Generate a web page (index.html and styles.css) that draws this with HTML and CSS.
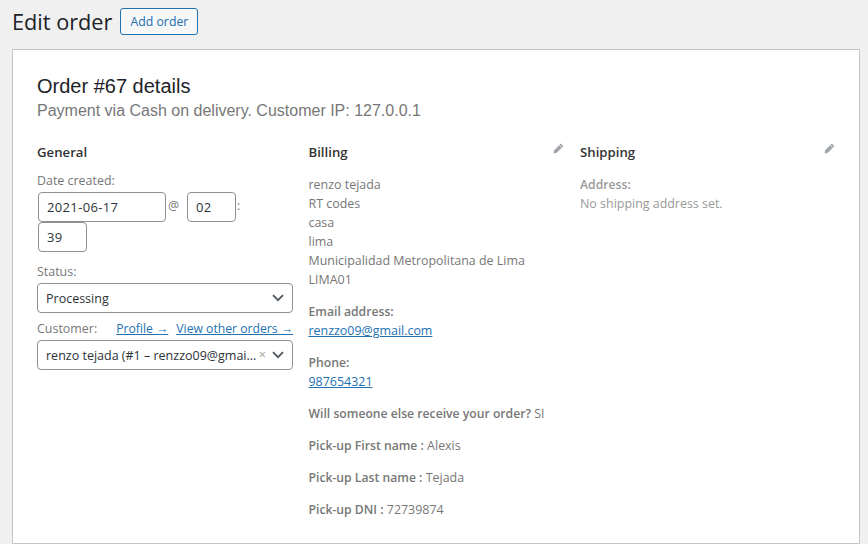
FILE: index.html
```html
<!doctype html>
<html>
<head>
  <title>Edit order</title>
  <link rel="stylesheet" href="styles.css">
</head>
<body>
  <div class="page-head">
    <h1>Edit order</h1>
    <a class="add-btn">Add order</a>
  </div>

  <div class="panel">
    <h2>Order #67 details</h2>
    <p class="meta">Payment via Cash on delivery. Customer IP: 127.0.0.1</p>

    <div class="columns">
      <div class="col">
        <h3>General</h3>
        <div class="field-label date-label">Date created:</div>
        <div class="date-row">
          <span class="input date-input digits">2021-06-17</span>
          <span class="sep">@</span>
          <span class="input num-input digits">02</span>
          <span class="sep colon">:</span>
          <span class="input num-input digits">39</span>
        </div>
        <div class="field-label status-label">Status:</div>
        <div class="input select">
          <span class="select-text">Processing</span>
          <svg class="chev" width="12" height="8" viewBox="0 0 12 8"><path d="M1 1.2l5 5 5-5" fill="none" stroke="#50575e" stroke-width="1.8"/></svg>
        </div>
        <div class="customer-row">
          <span class="field-label">Customer:</span>
          <span class="customer-links"><a>Profile →</a><a>View other orders →</a></span>
        </div>
        <div class="input select">
          <span class="select-text">renzo tejada (#1 – renzzo09@gmai...</span>
          <span class="clear">×</span>
          <svg class="chev" width="12" height="8" viewBox="0 0 12 8"><path d="M1 1.2l5 5 5-5" fill="none" stroke="#50575e" stroke-width="1.8"/></svg>
        </div>
      </div>

      <div class="col">
        <h3>Billing
          <svg class="pencil" width="11" height="11" viewBox="0 0 11 11"><path d="M7.8.6l2.6 2.6-6.6 6.6-3.2.6.6-3.2z" fill="#a0a3a8"/><path d="M6.3 2.1l2.6 2.6" stroke="#fff" stroke-width=".7"/></svg>
        </h3>
        <p class="block">renzo tejada<br>RT codes<br>casa<br>lima<br>Municipalidad Metropolitana de Lima<br>LIMA01</p>
        <p class="block"><b>Email address:</b><br><a>renzzo09@gmail.com</a></p>
        <p class="block"><b>Phone:</b><br><a>987654321</a></p>
        <p class="block"><b>Will someone else receive your order?</b> SI</p>
        <p class="block"><b>Pick-up First name :</b> Alexis</p>
        <p class="block"><b>Pick-up Last name :</b> Tejada</p>
        <p class="block"><b>Pick-up DNI :</b> 72739874</p>
      </div>

      <div class="col">
        <h3>Shipping
          <svg class="pencil" width="11" height="11" viewBox="0 0 11 11"><path d="M7.8.6l2.6 2.6-6.6 6.6-3.2.6.6-3.2z" fill="#a0a3a8"/><path d="M6.3 2.1l2.6 2.6" stroke="#fff" stroke-width=".7"/></svg>
        </h3>
        <p class="block ship"><b>Address:</b><br>No shipping address set.</p>
      </div>
    </div>
  </div>
</body>
</html>
```

FILE: styles.css
```css
html, body {
  height: 100%;
}
body {
  margin: 0;
  background-color: #f0f0f1;
  font-family: "Open Sans", "Noto Sans", sans-serif;
  font-size: 12.45px;
  color: #777;
  overflow: hidden;
}
a {
  color: #2271b1;
  text-decoration: underline;
}

.page-head {
  display: flex;
  align-items: center;
  gap: 8px;
  height: 49px;
  padding: 0 0 6px 12px;
  box-sizing: border-box;
}
h1 {
  margin: 0;
  font-size: 21.7px;
  font-weight: 400;
  color: #1d2327;
}
.add-btn {
  display: block;
  width: 78px;
  height: 27px;
  line-height: 25px;
  box-sizing: border-box;
  text-align: center;
  border: 1px solid #2271b1;
  border-radius: 3px;
  background: #f6f7f7;
  font-weight: 500;
  font-size: 12.3px;
  text-decoration: none;
}

.panel {
  margin: 0 8px 0 12px;
  height: 495px;
  box-sizing: border-box;
  background: #fff;
  border: 1px solid #c3c4c7;
  padding: 23px 24px 0;
}
h2 {
  margin: 0;
  font-family: "Liberation Sans", Arial, sans-serif;
  font-size: 20px;
  line-height: 26px;
  font-weight: 400;
  color: #1d2327;
}
.meta {
  margin: 0;
  font-family: "Liberation Sans", Arial, sans-serif;
  font-size: 16px;
  line-height: 24px;
  color: #777;
}

.columns {
  display: flex;
  margin-top: 19px;
}
.col {
  width: 271.5px;
  padding-right: 16px;
  box-sizing: border-box;
}
.col:last-child {
  padding-right: 0;
  width: 255px;
}
h3 {
  position: relative;
  margin: 0;
  font-size: 13.2px;
  line-height: 20px;
  font-weight: 600;
  color: #333;
}
.pencil {
  position: absolute;
  right: 0;
  top: 1px;
}

.field-label {
  line-height: 18px;
}
.date-label {
  margin-top: 10px;
  margin-bottom: 2px;
}
.date-row {
  display: flex;
  flex-wrap: wrap;
  align-items: flex-start;
  padding-left: 1px;
  width: 250px;
}
.input {
  display: block;
  box-sizing: border-box;
  height: 30px;
  line-height: 28px;
  border: 1px solid #8c8f94;
  border-radius: 4px;
  background: #fff;
  color: #2c3338;
  padding: 0 8px;
  font-size: 12.5px;
}
.digits {
  font-size: 13px;
  letter-spacing: .35px;
}
.date-input {
  width: 128px;
}
.num-input {
  width: 49px;
}
.sep {
  width: 21px;
  line-height: 28px;
  padding-left: 2px;
  box-sizing: border-box;
}
.colon {
  width: 8px;
  padding-left: 1px;
}
.status-label {
  margin-top: 11px;
  margin-bottom: 2px;
}
.select {
  display: flex;
  align-items: center;
  width: 256px;
}
.select-text {
  flex: 1;
  white-space: nowrap;
  overflow: hidden;
  padding-top: 1px;
}
.clear {
  color: #999;
  margin-right: 6px;
}
.customer-row {
  display: flex;
  justify-content: space-between;
  width: 256px;
  line-height: 18px;
  margin-top: 7px;
  margin-bottom: 2px;
}
.customer-links {
  font-size: 12.2px;
}
.customer-links a {
  margin-left: 8px;
}

.block {
  margin: 0 0 13px;
  line-height: 19px;
}
.block b {
  font-weight: 600;
  font-size: 12.2px;
}
h3 + .block {
  margin-top: 13px;
}
.ship {
  color: #999;
}
```
